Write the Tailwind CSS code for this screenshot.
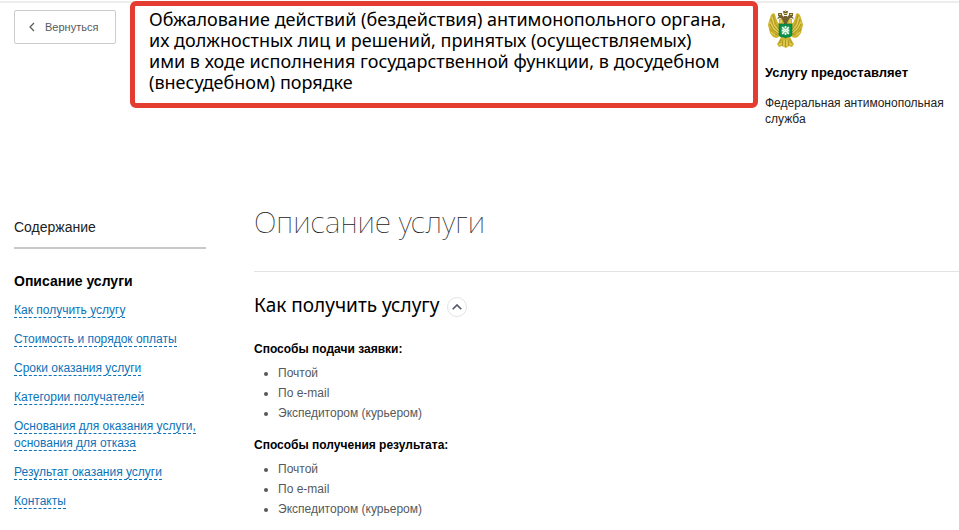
<!DOCTYPE html>
<html lang="ru">
<head>
<meta charset="utf-8">
<title>Описание услуги</title>
<script src="https://cdn.jsdelivr.net/npm/@tailwindcss/browser@4"></script>
</head>
<body class="bg-white font-['Liberation_Sans',Arial,sans-serif] text-xs text-black">
<div class="mt-px border-t-2 border-[#ededed]">
  <header class="flex items-start pl-3.5">
    <button type="button" class="mt-[7px] flex h-[34px] w-[102px] shrink-0 items-center gap-2.5 rounded-xs border border-[#ccc] pl-3.5 text-[11px] text-[#55595c]">
      <svg class="h-2.5 w-1.5 shrink-0" viewBox="0 0 6 10" fill="none" stroke="currentColor" stroke-width="1.2" aria-hidden="true"><path d="M5 1 1 5l4 4"/></svg>
      Вернуться
    </button>
    <div class="-mt-0.5 ml-3.5 min-w-0 flex-1 rounded-md border-5 border-[#e53c31] pt-[3px] pb-2.5 pl-3.5">
      <h1 class="font-['Noto_Sans',sans-serif] text-lg/[21px]">Обжалование действий (бездействия) антимонопольного органа,<br>их должностных лиц и решений, принятых (осуществляемых)<br>ими в ходе исполнения государственной функции, в досудебном<br>(внесудебном) порядке</h1>
    </div>
    <aside class="ml-[7px] w-[194px] shrink-0 pt-[7px]">
      <svg class="ml-[3px] h-[38px] w-[35px]" viewBox="0 0 35 38" role="img" aria-label="Герб Федеральной антимонопольной службы">
        <g fill="#cdb52f">
          <path d="M13 13 10 13 8 8 7 4 5 3 3 5 2 8 1 11 0 15l1 4 1 4 3 4 3 1 3-1 2-4z"/>
          <path d="M22 13l3 0 2-5 1-4 2-1 2 2 1 3 1 3 1 4-1 4-1 4-3 4-3 1-3-1-2-4z"/>
          <path d="M13 27h9l2 4 2 3-2 3-3-1-3 2-4-2-3 1-2-3 2-3z"/>
          <path d="M11 9h13v6H11z"/>
        </g>
        <path d="M5 5l2 8 4 6M3 9l3 8 5 5M2 14l3 6 6 4M2 19l4 5 5 1M30 5l-2 8-4 6M32 9l-3 8-5 5M33 14l-3 6-6 4M33 19l-4 5-5 1M13 29l-2 5M22 29l2 5M17.500 30v7M15 30l-1 6M20 30l1 6" fill="none" stroke="#a38a1c" stroke-width=".7"/>
        <path d="M4 7l2 8 5 6M2 12l4 7 5 4M3 22l4 3M31 7l-2 8-5 6M33 12l-4 7-5 4M32 22l-4 3M16 30v6M19 30v6M11 34h3M21 34h3" fill="none" stroke="#f0df78" stroke-width=".8"/>
        <g fill="#73602f">
          <path d="M16 13l-2-4-2-1-3 1 2-3 3-1 3 3zM19 13l2-4 2-1 3 1-2-3-3-1-3 3z"/>
          <path d="M15 1h5l-1 4h-3zM10 3h4v3h-4zM21 3h4v3h-4zM16 6h3v8h-3z"/>
        </g>
        <path fill="#dbcb69" d="M17 0h1v2h-1zM16 3h3v1h-3zM11 4h2v1h-2zM22 4h2v1h-2zM12 10h2v3h-2zM21 10h2v3h-2z"/>
        <path fill="#07924b" stroke="#087640" stroke-width=".6" d="M11 14h13v10q0 3-3 3h-1.500l-2 1-2-1H14q-3 0-3-3z"/>
        <circle cx="17.500" cy="20.500" r="4.300" fill="#69bd8a"/>
        <path d="M14 17l7 7M21 17l-7 7M14 20.500h2M19 20.500h2M17.500 16v2M17.500 23v2" fill="none" stroke="#f7fff3" stroke-width="1.300"/>
      </svg>
      <h2 class="mt-[15px] text-[13px]/5 font-bold">Услугу предоставляет</h2>
      <p class="mt-3 text-xs/4 text-[#222]">Федеральная антимонопольная служба</p>
    </aside>
  </header>

  <div class="mt-[75px] flex items-start pl-3.5">
    <nav aria-label="Содержание" class="mt-[15px] w-48 shrink-0">
      <h2 class="border-b-2 border-[#c7c7cc] pb-2.5 text-sm/5 text-[#222]">Содержание</h2>
      <h3 class="mt-[22px] text-sm/5 font-bold">Описание услуги</h3>
      <ul class="mt-[11px] flex flex-col gap-3 text-xs/[17px] text-[#0b73b9]">
        <li><a href="#how" class="border-b border-dashed border-[#0b73b9]">Как получить услугу</a></li>
        <li><a href="#price" class="border-b border-dashed border-[#0b73b9]">Стоимость и порядок оплаты</a></li>
        <li><a href="#terms" class="border-b border-dashed border-[#0b73b9]">Сроки оказания услуги</a></li>
        <li><a href="#categories" class="border-b border-dashed border-[#0b73b9]">Категории получателей</a></li>
        <li><a href="#grounds" class="border-b border-dashed border-[#0b73b9]">Основания для оказания услуги, основания для отказа</a></li>
        <li><a href="#result" class="border-b border-dashed border-[#0b73b9]">Результат оказания услуги</a></li>
        <li><a href="#contacts" class="border-b border-dashed border-[#0b73b9]">Контакты</a></li>
      </ul>
    </nav>
    <main class="ml-12 min-w-0 flex-1">
      <h1 class="border-b border-[#e1e4e5] pb-[29px] font-['Noto_Sans',sans-serif] text-3xl/10 font-thin text-[#222]">Описание услуги</h1>
      <section id="how">
        <div class="mt-[19px] flex items-center gap-2">
          <h2 class="font-['Noto_Sans',sans-serif] text-[19px]/7">Как получить услугу</h2>
          <button type="button" aria-label="Свернуть" aria-expanded="true" class="mt-1 flex size-5 items-center justify-center rounded-full border border-[#dfe4e8] text-[#4c5560]">
            <svg class="h-1.5 w-2.5" viewBox="0 0 10 6" fill="none" stroke="currentColor" stroke-width="1.600" aria-hidden="true"><path d="M.7 5.300 5 1l4.300 4.300"/></svg>
          </button>
        </div>
        <h3 class="mt-5 text-xs/5 font-bold">Способы подачи заявки:</h3>
        <ul class="mt-1 list-disc pl-6 text-xs/5 text-[#55595c]">
          <li>Почтой</li>
          <li>По e-mail</li>
          <li>Экспедитором (курьером)</li>
        </ul>
        <h3 class="mt-3 text-xs/5 font-bold">Способы получения результата:</h3>
        <ul class="mt-1 list-disc pl-6 text-xs/5 text-[#55595c]">
          <li>Почтой</li>
          <li>По e-mail</li>
          <li>Экспедитором (курьером)</li>
        </ul>
      </section>
    </main>
  </div>
</div>
</body>
</html>
